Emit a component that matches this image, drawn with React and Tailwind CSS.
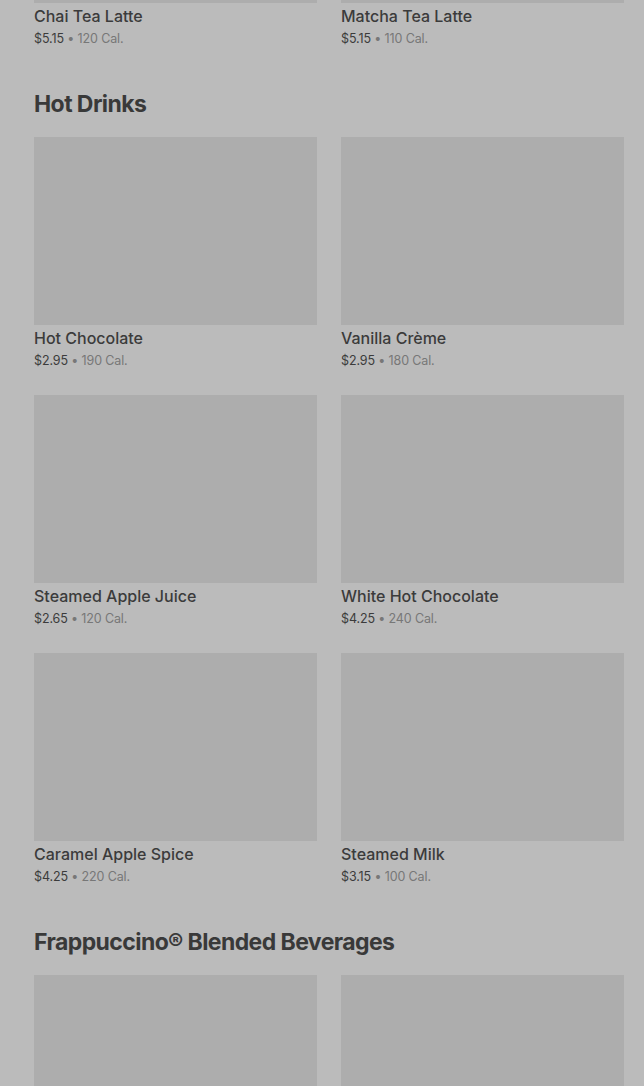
const sections = [
  {
    title: null,
    items: [
      { name: "Chai Tea Latte", price: "$5.15", cal: "120 Cal." },
      { name: "Matcha Tea Latte", price: "$5.15", cal: "110 Cal." },
    ],
  },
  {
    title: "Hot Drinks",
    items: [
      { name: "Hot Chocolate", price: "$2.95", cal: "190 Cal." },
      { name: "Vanilla Crème", price: "$2.95", cal: "180 Cal." },
      { name: "Steamed Apple Juice", price: "$2.65", cal: "120 Cal." },
      { name: "White Hot Chocolate", price: "$4.25", cal: "240 Cal." },
      { name: "Caramel Apple Spice", price: "$4.25", cal: "220 Cal." },
      { name: "Steamed Milk", price: "$3.15", cal: "100 Cal." },
    ],
  },
  {
    title: "Frappuccino® Blended Beverages",
    // only the tops of these images are in view
    items: [{ id: "frap-1" }, { id: "frap-2" }],
  },
];

const ProductCard = ({ item }) => (
  <div>
    <div className="h-[188px] bg-[#adadad]" />
    {item.name && (
      <>
        <p className="mt-[3px] text-[16px] leading-5 font-medium text-[#3b3b3b]">
          {item.name}
        </p>
        <p className="mt-[3px] text-[12.5px] leading-5 tracking-[-0.01em] text-[#3b3b3b]">
          {item.price}
          <span className="text-[#777777]"> • {item.cal}</span>
        </p>
      </>
    )}
  </div>
);

export default function App() {
  return (
    <div
      className="h-[1086px] overflow-hidden bg-[#bbbbbb]"
      style={{ fontFamily: "Inter, 'Noto Sans', sans-serif" }}
    >
      <div className="-mt-[185px] pl-[34px] pr-[20px]">
        {sections.map((section, i) => (
          <section key={i} className={i > 0 ? "mt-[39px]" : ""}>
            {section.title && (
              <h2 className="mb-[17px] text-[23px] leading-8 font-bold tracking-[-0.025em] text-[#393939]">
                {section.title}
              </h2>
            )}
            <div className="grid grid-cols-2 gap-x-[24px] gap-y-[24px]">
              {section.items.map((item) => (
                <ProductCard key={item.name || item.id} item={item} />
              ))}
            </div>
          </section>
        ))}
      </div>
    </div>
  );
}
